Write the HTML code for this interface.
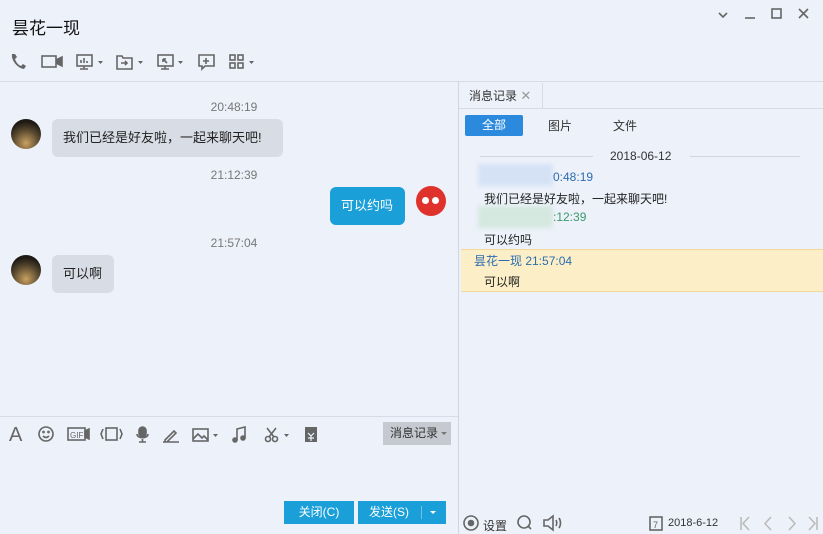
<!DOCTYPE html>
<html><head><meta charset="utf-8"><style>
*{margin:0;padding:0;box-sizing:border-box}
body{width:823px;height:534px;background:#edf1fa;font-family:"Liberation Sans","Noto Sans CJK SC",sans-serif;position:relative;overflow:hidden;color:#222}
.a{position:absolute}
.ic{position:absolute;fill:none;stroke:#666;stroke-width:1.6}
.time{position:absolute;font-size:12px;color:#777;width:80px;text-align:center}
.bub{position:absolute;border-radius:6px;font-size:13px;padding:0 11px;line-height:38px}
.av{position:absolute;width:30px;height:30px;border-radius:50%;background:radial-gradient(circle at 50% 80%,#c9a060,#5a4a30 45%,#1e1a14 75%)}
.dd{position:absolute;width:0;height:0;border-left:3px solid transparent;border-right:3px solid transparent;border-top:3px solid #777}
</style></head><body>
<div class="a" style="left:12px;top:14px;font-size:17px;color:#111">昙花一现</div>
<svg class="ic" style="left:715px;top:5px" width="105" height="18" stroke-width="1.3">
<path d="M4 8l4 4 4-4"/><path d="M30 13h10"/><rect x="57" y="4" width="9" height="9"/><path d="M84 4l9 9M93 4l-9 9"/>
</svg>
<svg class="ic" style="left:10px;top:52px" width="250" height="20">
<path d="M2 2c-1 6 5 14 12 15l2-3-3-2-2 2c-3-1-5-4-6-7l2-2-2-3z" fill="#666" stroke="none"/>
<rect x="32" y="4" width="14" height="11"/><path d="M46 8l6-3v9l-6-3" fill="#666"/>
<rect x="67" y="3" width="15" height="11"/><path d="M74 14v3M70 17h8M71 11v-3M74 11v-5M77 11v-2"/><path d="M88 9h5l-2.5 3z" fill="#666" stroke="none"/>
<path d="M107 4h5l1 2h9v11h-15z"/><path d="M111 11h6M115 9l2 2-2 2"/><path d="M128 9h5l-2.5 3z" fill="#666" stroke="none"/>
<rect x="148" y="3" width="15" height="11"/><path d="M155 14v3M151 17h8M153 7l4 4M153 7h3M153 7v3"/><path d="M168 9h5l-2.5 3z" fill="#666" stroke="none"/>
<path d="M189 3h15v11h-9l-3 3v-3h-3z"/><path d="M196 6v6M193 9h6"/>
<rect x="220" y="3" width="5" height="5"/><rect x="228" y="3" width="5" height="5"/><rect x="220" y="11" width="5" height="5"/><rect x="228" y="11" width="5" height="5"/><path d="M239 9h5l-2.5 3z" fill="#666" stroke="none"/>
</svg>
<div class="a" style="left:0;top:81px;width:823px;height:1px;background:#d6dbe5"></div>
<div class="a" style="left:458px;top:81px;width:1px;height:453px;background:#d0d5df"></div>
<!-- chat -->
<div class="time" style="left:194px;top:100px">20:48:19</div>
<div class="av" style="left:11px;top:119px"></div>
<div class="bub" style="left:52px;top:119px;background:#d8dce4;width:231px">我们已经是好友啦，一起来聊天吧!</div>
<div class="time" style="left:194px;top:168px">21:12:39</div>
<div class="bub" style="left:330px;top:187px;background:#1a9fd9;color:#fff;width:75px">可以约吗</div>
<div class="a" style="left:416px;top:186px;width:30px;height:30px;border-radius:50%;background:#e0322c"></div>
<div class="a" style="left:422px;top:197px;width:7px;height:7px;border-radius:50%;background:#fff"></div>
<div class="a" style="left:432px;top:197px;width:7px;height:7px;border-radius:50%;background:#fff"></div>
<div class="time" style="left:194px;top:236px">21:57:04</div>
<div class="av" style="left:11px;top:255px"></div>
<div class="bub" style="left:52px;top:255px;background:#d8dce4;width:62px">可以啊</div>
<div class="a" style="left:0;top:416px;width:458px;height:1px;background:#d6dbe5"></div>
<div class="a" style="left:9px;top:424px;font-size:20px;color:#666">A</div>
<svg class="ic" style="left:37px;top:425px" width="290" height="20">
<circle cx="9" cy="9" r="7"/><path d="M6 11c2 2 4 2 6 0" /><circle cx="6.5" cy="7" r=".6"/><circle cx="11.5" cy="7" r=".6"/>
<rect x="31" y="3" width="17" height="12"/><text x="33" y="13" font-size="8" fill="#666" stroke="none" font-family="Liberation Sans">GIF</text><path d="M48 6l4-2v10l-4-2z" fill="#666"/>
<path d="M66 4l-2 5 2 5M83 4l2 5-2 5"/><rect x="69" y="3" width="11" height="12"/>
<rect x="102" y="2" width="7" height="10" rx="3.5" fill="#666"/><path d="M100 9c0 5 11 5 11 0M105.5 14v3M102 17h7"/>
<path d="M128 15l9-9 2 2-9 9h-2zM126 17h16"/>
<rect x="156" y="4" width="15" height="12"/><path d="M156 14l5-5 4 4 2-2 4 4"/><path d="M176 9h5l-2.5 3z" fill="#666" stroke="none"/>
<path d="M200 15V4l8-2v11"/><circle cx="198" cy="15" r="2" fill="#666"/><circle cx="206" cy="13" r="2" fill="#666"/>
<circle cx="231" cy="14" r="2.5"/><circle cx="238" cy="14" r="2.5"/><path d="M232 12l7-9M237 12l-7-9"/><path d="M247 9h5l-2.5 3z" fill="#666" stroke="none"/>
<rect x="268" y="2" width="12" height="15" fill="#666" stroke="none"/><path d="M271 8l3 3 3-3M274 11v5M271 13h6" stroke="#edf1fa" stroke-width="1.2"/>
</svg>
<div class="a" style="left:383px;top:422px;width:68px;height:23px;background:#c6c9cf;font-size:12px;line-height:23px;padding-left:7px;color:#333">消息记录</div>
<div class="dd" style="left:441px;top:432px"></div>
<div class="a" style="left:284px;top:501px;width:70px;height:23px;background:#1a9fd9;color:#fff;font-size:12px;line-height:23px;text-align:center">关闭(C)</div>
<div class="a" style="left:358px;top:501px;width:88px;height:23px;background:#1a9fd9;color:#fff;font-size:12px;line-height:23px;padding-left:11px">发送(S)</div>
<div class="a" style="left:421px;top:506px;width:1px;height:13px;background:#6cc3ea"></div>
<div class="dd" style="left:430px;top:511px;border-top-color:#fff"></div>
<!-- right -->
<div class="a" style="left:459px;top:83px;width:84px;height:26px;border-right:1px solid #d6dbe5;font-size:12px;line-height:26px;padding-left:10px;color:#333">消息记录 <span style="color:#999;font-size:13px">✕</span></div>
<div class="a" style="left:459px;top:108px;width:364px;height:1px;background:#d6dbe5"></div>
<div class="a" style="left:465px;top:115px;width:58px;height:21px;background:#2b8ade;border-radius:2px;color:#fff;font-size:12px;line-height:21px;text-align:center">全部</div>
<div class="a" style="left:548px;top:117px;font-size:12px;color:#333">图片</div>
<div class="a" style="left:613px;top:117px;font-size:12px;color:#333">文件</div>
<div class="a" style="left:480px;top:156px;width:113px;height:1px;background:#d0d5df"></div>
<div class="a" style="left:690px;top:156px;width:110px;height:1px;background:#d0d5df"></div>
<div class="a" style="left:610px;top:149px;font-size:12px;color:#333">2018-06-12</div>
<div class="a" style="left:478px;top:164px;width:75px;height:22px;background:#d5e2f6;filter:blur(2px)"></div>
<div class="a" style="left:553px;top:170px;font-size:12px;color:#2b6cb0">0:48:19</div>
<div class="a" style="left:484px;top:190px;font-size:12px;color:#222">我们已经是好友啦，一起来聊天吧!</div>
<div class="a" style="left:478px;top:206px;width:75px;height:22px;background:#d5e8e0;filter:blur(2px)"></div>
<div class="a" style="left:553px;top:210px;font-size:12px;color:#3a9a6a">:12:39</div>
<div class="a" style="left:484px;top:231px;font-size:12px;color:#222">可以约吗</div>
<div class="a" style="left:461px;top:249px;width:362px;height:43px;background:#fcefc7;border-top:1px solid #f2d99a;border-bottom:1px solid #f2d99a"></div>
<div class="a" style="left:474px;top:252px;font-size:12px;color:#2b6cb0">昙花一现 21:57:04</div>
<div class="a" style="left:484px;top:273px;font-size:12px;color:#222">可以啊</div>
<svg class="ic" style="left:462px;top:514px" width="360" height="20" stroke-width="1.4">
<circle cx="9" cy="9" r="7"/><circle cx="9" cy="9" r="2.5" fill="#666"/>
<circle cx="62" cy="8" r="6"/><path d="M66 12l3 3"/>
<path d="M82 6h4l5-4v14l-5-4h-4zM94 6c1 2 1 4 0 6M97 4c2 3 2 7 0 10"/>
<rect x="188" y="3" width="12" height="13"/><text x="191" y="14" font-size="9" fill="#666" stroke="none" font-family="Liberation Sans">7</text>
<g stroke="#bbb"><path d="M279 3v13M287 3l-6 6.5 6 6.5M309 3l-6 6.5 6 6.5M327 3l6 6.5-6 6.5M347 3l6 6.5-6 6.5M355 3v13"/></g>
</svg>
<div class="a" style="left:483px;top:517px;font-size:12px;color:#333">设置</div>
<div class="a" style="left:668px;top:517px;font-size:11px;color:#333">2018-6-12</div>
</body></html>
